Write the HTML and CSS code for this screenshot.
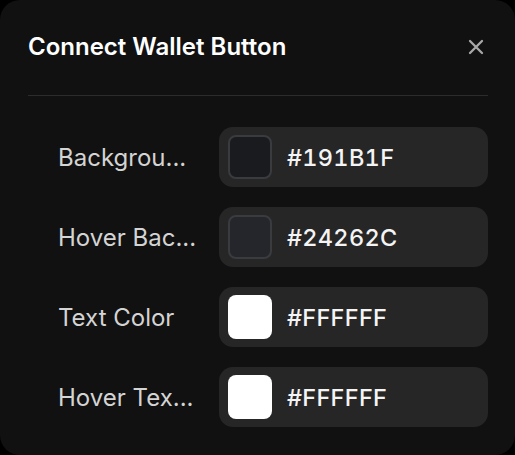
FILE: index.html
```html
<!DOCTYPE html>
<html lang="en">
<head>
  <meta charset="UTF-8">
  <meta name="viewport" content="width=device-width, initial-scale=1.0">
  <title>Connect Wallet Button</title>
  <link rel="stylesheet" href="styles.css">
</head>
<body>

  <div class="panel">
    <div class="panel-header">
      <h2>Connect Wallet Button</h2>
      <span class="close">
        <svg width="16" height="16" viewBox="0 0 16 16">
          <path d="M2 2 L14 14 M14 2 L2 14" stroke="#a8a8a8" stroke-width="2.3" stroke-linecap="round"/>
        </svg>
      </span>
    </div>

    <div class="fields">
      <div class="field">
        <div class="label" title="Background">Backgrou...</div>
        <div class="color-input">
          <span class="swatch dark" style="background-color: #191B1F;"></span>
          <span class="hex">#191B1F</span>
        </div>
      </div>
      <div class="field">
        <div class="label" title="Hover Background">Hover Bac...</div>
        <div class="color-input">
          <span class="swatch dark" style="background-color: #24262C;"></span>
          <span class="hex">#24262C</span>
        </div>
      </div>
      <div class="field">
        <div class="label">Text Color</div>
        <div class="color-input">
          <span class="swatch" style="background-color: #FFFFFF;"></span>
          <span class="hex">#FFFFFF</span>
        </div>
      </div>
      <div class="field">
        <div class="label" title="Hover Text Color">Hover Tex...</div>
        <div class="color-input">
          <span class="swatch" style="background-color: #FFFFFF;"></span>
          <span class="hex">#FFFFFF</span>
        </div>
      </div>
    </div>
  </div>

</body>
</html>
```

FILE: styles.css
```css
html, body {
  margin: 0;
  padding: 0;
  background-color: #000;
}
body {
  font-family: Inter, "Noto Sans", sans-serif;
  color: white;
}
.panel {
  box-sizing: border-box;
  width: 515px;
  height: 455px;
  background-color: #111111;
  border-radius: 20px;
  padding: 0 27px 0 28px;
  overflow: hidden;
}
.panel-header {
  display: flex;
  justify-content: space-between;
  align-items: center;
  height: 95px;
  border-bottom: 1px solid #2c2c2c;
}
.panel-header h2 {
  margin: 0;
  font-size: 24px;
  font-weight: 600;
  position: relative;
  top: -1px;
}
.close {
  display: flex;
  margin-right: 4px;
  position: relative;
  top: -1px;
  cursor: pointer;
}

.fields {
  display: flex;
  flex-direction: column;
  gap: 20px;
  padding: 31px 0 0 30px;
}
.field {
  display: flex;
  align-items: center;
}
.label {
  width: 140px;
  margin-right: 21px;
  font-size: 24px;
  color: #d4d4d4;
  white-space: nowrap;
}
.color-input {
  flex-grow: 1;
  display: flex;
  align-items: center;
  height: 60px;
  background-color: #262626;
  border-radius: 14px;
  padding-left: 9px;
}
.swatch {
  box-sizing: border-box;
  width: 44px;
  height: 44px;
  border-radius: 8px;
}
.swatch.dark {
  border: 2px solid #3a3b3e;
}
.hex {
  margin-left: 15px;
  font-size: 23.5px;
  font-weight: 500;
  color: #f4f4f4;
  letter-spacing: 0.3px;
  font-variant-numeric: tabular-nums;
}
```
